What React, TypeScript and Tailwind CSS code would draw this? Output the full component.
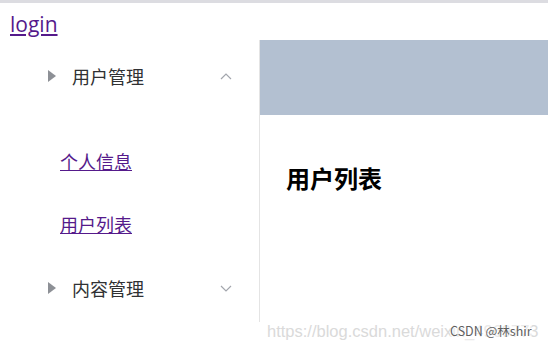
import React from 'react';

const font = { fontFamily: '"Noto Sans CJK SC", "Noto Sans", sans-serif' };

const Caret = () => (
  <svg width="8" height="12" viewBox="0 0 8 12" className="shrink-0">
    <polygon points="0,0 8,6 0,12" fill="#8d9096" />
  </svg>
);

const Chevron = ({ up }: { up?: boolean }) => (
  <svg width="12" height="7" viewBox="0 0 12 7" className="shrink-0">
    <polyline
      points={up ? '1,6 6,1 11,6' : '1,1 6,6 11,1'}
      fill="none"
      stroke="#a3a6ad"
      strokeWidth="1.2"
    />
  </svg>
);

const MenuTitle = ({ label, up }: { label: string; up?: boolean }) => (
  <div className="flex items-center h-[56px] pl-[48px] pr-[27px]">
    <Caret />
    <span className="ml-[16px] text-[18px] text-[#303133] flex-1 leading-none">{label}</span>
    <Chevron up={up} />
  </div>
);

const App = () => {
  return (
    <div className="relative w-[548px] h-[346px] bg-white overflow-hidden" style={font}>
      <div className="h-[3px] bg-[#dcdce1]" />
      <div className="h-[37px] pl-[10px] flex items-start pt-[11px]">
        <a
          href="#"
          className="text-[21px] leading-none text-[#551a8b] underline"
          style={{ fontFamily: '"Open Sans", sans-serif' }}
        >
          login
        </a>
      </div>

      <div className="flex">
        <aside className="w-[260px] h-[282px] border-r border-[#e4e4e4] pt-[8px]">
          <MenuTitle label="用户管理" up />
          <div className="mt-[37px] pl-[60px]">
            <div className="h-[40px] flex items-center">
              <a href="#" className="text-[18px] leading-none text-[#551a8b] underline">个人信息</a>
            </div>
            <div className="mt-[23px] h-[40px] flex items-center">
              <a href="#" className="text-[18px] leading-none text-[#551a8b] underline">用户列表</a>
            </div>
          </div>
          <div className="mt-[16px]">
            <MenuTitle label="内容管理" />
          </div>
        </aside>

        <div className="flex-1 flex flex-col">
          <header className="h-[75px] bg-[#b3c0d1]" />
          <main className="pl-[26px] pt-[51px]">
            <h3 className="text-[24px] font-bold text-black leading-none">用户列表</h3>
          </main>
        </div>
      </div>

      <div
        className="absolute left-[267px] top-[319px] text-[16.5px] text-[#dadada] whitespace-nowrap"
        style={{ fontFamily: '"Liberation Sans", sans-serif' }}
      >
        https://blog.csdn.net/weixin_4969773
      </div>
      <div className="absolute left-[450px] top-[322px] text-[12.5px] text-[#5f5f5f] bg-white/40 whitespace-nowrap">
        CSDN @林shir
      </div>
    </div>
  );
};

export default App;
